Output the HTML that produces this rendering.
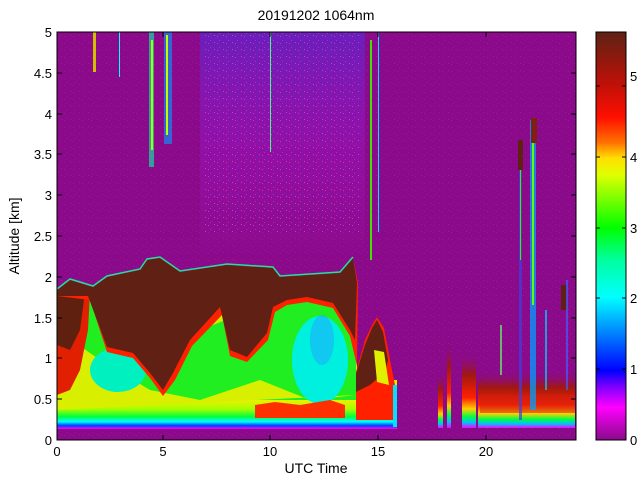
<!DOCTYPE html>
<html><head><meta charset="utf-8"><style>
html,body{margin:0;padding:0;background:#fff;}
svg{display:block;font-family:"Liberation Sans",sans-serif;}
</style></head><body>
<svg width="640" height="480" viewBox="0 0 640 480" xmlns="http://www.w3.org/2000/svg">
<defs>
<linearGradient id="cb" x1="0" y1="0" x2="0" y2="1">
<stop offset="0" stop-color="#5e2214"/>
<stop offset="0.13" stop-color="#c01008"/>
<stop offset="0.21" stop-color="#ff1000"/>
<stop offset="0.27" stop-color="#ff7000"/>
<stop offset="0.31" stop-color="#ffe000"/>
<stop offset="0.35" stop-color="#e0ff00"/>
<stop offset="0.48" stop-color="#00ff00"/>
<stop offset="0.56" stop-color="#00ffa0"/>
<stop offset="0.65" stop-color="#00ffff"/>
<stop offset="0.74" stop-color="#0080ff"/>
<stop offset="0.83" stop-color="#0000ff"/>
<stop offset="0.87" stop-color="#8000ff"/>
<stop offset="0.92" stop-color="#ff00ff"/>
<stop offset="1" stop-color="#8a0a8a"/>
</linearGradient>
<linearGradient id="base" x1="0" y1="0" x2="0" y2="1">
<stop offset="0" stop-color="#d8f000"/>
<stop offset="0.4" stop-color="#f0f000"/>
<stop offset="0.6" stop-color="#a0ff00"/>
<stop offset="0.75" stop-color="#00ff40"/>
<stop offset="0.85" stop-color="#00ffff"/>
<stop offset="0.93" stop-color="#0040ff"/>
<stop offset="1" stop-color="#ff00ff"/>
</linearGradient>
<linearGradient id="rbase" x1="0" y1="0" x2="0" y2="1">
<stop offset="0" stop-color="#8a0a8a" stop-opacity="0"/>
<stop offset="0.3" stop-color="#a01810"/>
<stop offset="0.6" stop-color="#ff2000"/>
<stop offset="0.75" stop-color="#ffd000"/>
<stop offset="0.85" stop-color="#00ff40"/>
<stop offset="0.93" stop-color="#00c0ff"/>
<stop offset="1" stop-color="#ff00ff"/>
</linearGradient>
<linearGradient id="noise" x1="0" y1="0" x2="0" y2="1">
<stop offset="0" stop-color="#5030e0" stop-opacity="0.55"/>
<stop offset="0.5" stop-color="#a020e0" stop-opacity="0.3"/>
<stop offset="1" stop-color="#c020d0" stop-opacity="0"/>
</linearGradient>
<pattern id="spk" width="9" height="7" patternUnits="userSpaceOnUse">
<rect x="1" y="1" width="1" height="1" fill="#ff30ff"/>
<rect x="5" y="3" width="1" height="1" fill="#2040ff"/>
<rect x="3" y="5" width="1" height="1" fill="#e020ff"/>
<rect x="7" y="0" width="1" height="1" fill="#ff40ff"/>
</pattern>
</defs>
<rect x="57" y="32" width="519" height="408" fill="#8a0a8a"/>
<rect x="57" y="32" width="519" height="408" fill="url(#spk)" opacity="0.2"/>
<rect x="200" y="32" width="165" height="230" fill="url(#noise)"/>
<rect x="205" y="32" width="155" height="200" fill="url(#spk)" opacity="0.6"/>
<!-- upper plumes -->
<rect x="149" y="32" width="5" height="135" fill="#20c0a0" opacity="0.8"/>
<rect x="151" y="40" width="2" height="110" fill="#a0ff00"/>
<rect x="164" y="32" width="8" height="112" fill="#00a0ff" opacity="0.6"/>
<rect x="166" y="35" width="2" height="100" fill="#c0ff00"/>
<rect x="93" y="32" width="3" height="40" fill="#d0c000"/>
<rect x="119" y="32" width="1" height="45" fill="#00ffff"/>
<rect x="370" y="40" width="2" height="220" fill="#40e000"/>
<rect x="378" y="32" width="1" height="200" fill="#00e0ff"/>
<rect x="270" y="32" width="1" height="120" fill="#40ff80"/>
<!-- low base layer -->
<rect x="57" y="380" width="340" height="49" fill="url(#base)"/>
<polygon points="57,300 357,300 357,390 57,390" fill="#c8f000"/>
<!-- green -->
<polygon points="57,300 85,300 110,300 200,330 290,295 356,290 356,400 57,400" fill="#20ee20"/>
<polygon points="57,330 100,360 150,390 200,400 260,380 310,400 356,395 57,410" fill="#d8f000"/>
<ellipse cx="320" cy="360" rx="28" ry="44" fill="#00f0e0"/>
<ellipse cx="322" cy="340" rx="12" ry="25" fill="#20a0ff" opacity="0.5"/>
<ellipse cx="118" cy="370" rx="28" ry="22" fill="#00f0c0"/>
<!-- red band -->
<polygon points="255,405 275,402 300,405 330,400 345,405 345,418 255,418" fill="#ff3000"/>
<!-- left red -->
<polygon points="57,292 90,292 88,330 80,370 70,390 57,395" fill="#e02000"/>
<polygon points="57,292 85,292 80,330 70,350 57,345" fill="#602010"/>
<!-- main dark cloud -->
<polygon fill="#ff2000" points="57,292 70,280 93,287 107,277 140,270 147,260 160,258 180,272 227,265 273,268 280,277 340,273 353,258 358,283 357,366 350,336 333,308 307,302 287,305 275,312 268,340 247,362 230,356 222,315 192,346 175,380 163,396 150,378 133,358 107,352 90,300 57,296"/>
<polygon fill="#602014" points="57,290 70,280 93,287 107,277 140,270 147,260 160,258 180,272 227,265 273,268 280,277 340,273 353,258 357,283 355,340 350,330 333,303 307,297 287,300 273,307 267,333 247,357 230,350 220,307 190,340 173,373 163,390 150,373 133,353 107,347 88,296 57,296"/>
<polyline fill="none" stroke="#20e0a0" stroke-width="1.5" points="57,289 70,279 93,286 107,276 140,269 147,259 160,257 180,271 227,264 273,267 280,276 340,272 353,257"/>
<!-- right bump -->
<polygon fill="#ff2000" points="356,372 365,340 372,325 377,317 384,328 390,360 395,385 395,420 356,420"/>
<polygon fill="#602014" points="356,374 365,345 372,328 377,320 383,332 388,360 385,372 370,385 356,392"/>
<polygon fill="#e0f000" points="374,350 384,352 389,385 377,382"/>
<rect x="393" y="385" width="4" height="42" fill="#00e0ff"/>
<!-- right part -->
<rect x="438" y="372" width="5" height="56" fill="url(#rbase)"/>
<rect x="447" y="340" width="4" height="88" fill="url(#rbase)"/>
<rect x="462" y="352" width="14" height="76" fill="url(#rbase)"/>
<rect x="478" y="370" width="97" height="58" fill="url(#rbase)"/>
<rect x="480" y="395" width="95" height="18" fill="#d02010" opacity="0.5"/>
<rect x="519" y="140" width="3" height="280" fill="#4040e0" opacity="0.7"/>
<rect x="520" y="150" width="1" height="110" fill="#40f000"/>
<rect x="530" y="120" width="6" height="290" fill="#00a0ff" opacity="0.75"/>
<rect x="532" y="125" width="2" height="180" fill="#60ff00"/>
<rect x="518" y="140" width="5" height="30" fill="#602014"/>
<rect x="531" y="118" width="6" height="25" fill="#802010"/>
<rect x="561" y="285" width="6" height="25" fill="#602014"/>
<rect x="566" y="280" width="2" height="110" fill="#4060ff" opacity="0.7"/>
<rect x="545" y="310" width="2" height="80" fill="#00d0ff" opacity="0.7"/>
<rect x="500" y="325" width="2" height="50" fill="#60ff60" opacity="0.7"/>
<!-- axes -->
<rect x="57" y="32" width="519" height="408" fill="none" stroke="#000" stroke-width="1"/>
<g stroke="#000" stroke-width="1">
<path d="M57,440v-5M163,440v-5M270,440v-5M378,440v-5M486,440v-5M57,32v5M163,32v5M270,32v5M378,32v5M486,32v5"/>
<path d="M57,440h5M57,399h5M57,358h5M57,318h5M57,277h5M57,236h5M57,195h5M57,154h5M57,114h5M57,73h5M57,32h5"/>
<path d="M576,440h-5M576,399h-5M576,358h-5M576,318h-5M576,277h-5M576,236h-5M576,195h-5M576,154h-5M576,114h-5M576,73h-5"/>
</g>
<g font-size="14" fill="#000">
<text x="316" y="20" text-anchor="middle">20191202 1064nm</text>
<text x="316" y="473" text-anchor="middle">UTC Time</text>
<text transform="translate(19,236) rotate(-90)" text-anchor="middle">Altitude [km]</text>
</g>
<g font-size="13" fill="#000" text-anchor="middle">
<text x="57" y="456">0</text><text x="163" y="456">5</text><text x="270" y="456">10</text><text x="378" y="456">15</text><text x="486" y="456">20</text>
</g>
<g font-size="13" fill="#000" text-anchor="end">
<text x="52" y="445">0</text><text x="52" y="404">0.5</text><text x="52" y="363">1</text><text x="52" y="323">1.5</text><text x="52" y="282">2</text><text x="52" y="241">2.5</text><text x="52" y="200">3</text><text x="52" y="159">3.5</text><text x="52" y="119">4</text><text x="52" y="78">4.5</text><text x="52" y="37">5</text>
</g>
<rect x="596" y="32" width="30" height="408" fill="url(#cb)" stroke="#000" stroke-width="1"/>
<g stroke="#000"><path d="M626,440h-4M626,369h-4M626,298h-4M626,228h-4M626,157h-4M626,86h-4M596,369h4M596,298h4M596,228h4M596,157h4M596,86h4"/></g>
<g font-size="13" fill="#000">
<text x="630" y="445">0</text><text x="630" y="374">1</text><text x="630" y="303">2</text><text x="630" y="233">3</text><text x="630" y="162">4</text><text x="630" y="81">5</text>
</g>
</svg>
</body></html>
